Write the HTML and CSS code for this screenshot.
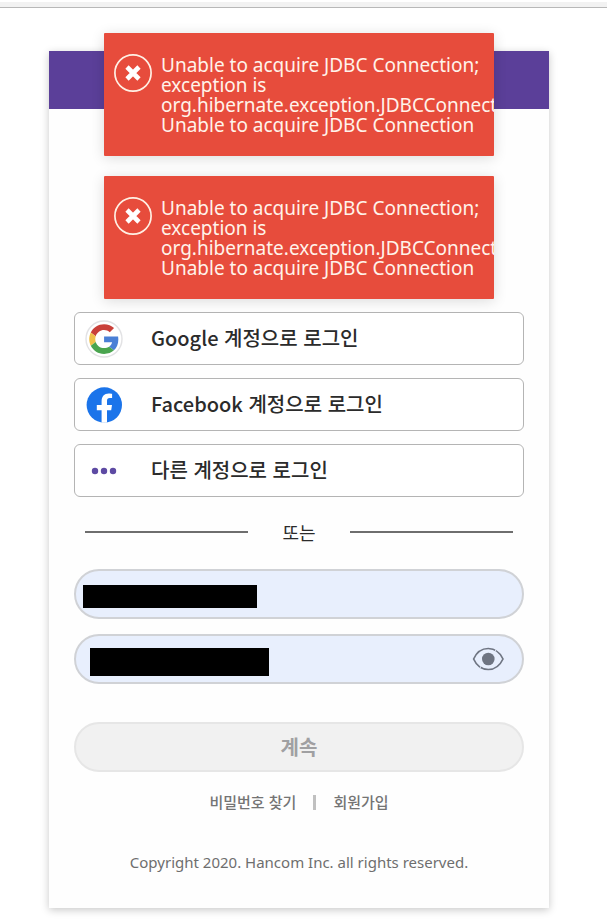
FILE: index.html
```html
<!DOCTYPE html>
<html lang="ko">
<head>
<meta charset="utf-8">
<title>로그인</title>
<link rel="stylesheet" href="styles.css">
</head>
<body>
<div class="topbar"></div>
<main class="page">
  <div class="card">
    <header class="card-header"></header>
    <div class="card-body">
      <div class="providers">
        <button type="button" class="provider">
          <svg class="provider-icon" viewBox="0 0 38 38" aria-hidden="true">
            <circle cx="19" cy="19" r="18" fill="#fff" stroke="#e2e2e4" stroke-width="1.4"/>
            <g transform="translate(4.2 4.2) scale(.62)">
              <path fill="#c9403a" d="M24 9.5c3.54 0 6.71 1.22 9.21 3.6l6.85-6.85C35.9 2.38 30.47 0 24 0 14.62 0 6.51 5.38 2.56 13.22l7.98 6.19C12.43 13.72 17.74 9.5 24 9.5z"/>
              <path fill="#4a7fd6" d="M46.98 24.55c0-1.57-.15-3.09-.38-4.55H24v9.02h12.94c-.58 2.96-2.26 5.48-4.78 7.18l7.73 6c4.51-4.18 7.09-10.36 7.09-17.65z"/>
              <path fill="#efc04a" d="M10.53 28.59c-.48-1.45-.76-2.99-.76-4.59s.27-3.14.76-4.59l-7.98-6.19C.92 16.46 0 20.12 0 24c0 3.88.92 7.54 2.56 10.78l7.97-6.19z"/>
              <path fill="#4aa54f" d="M24 48c6.48 0 11.93-2.13 15.89-5.81l-7.73-6c-2.15 1.45-4.92 2.3-8.16 2.3-6.26 0-11.57-4.22-13.47-9.91l-7.98 6.19C6.51 42.62 14.62 48 24 48z"/>
            </g>
          </svg>
          <span>Google 계정으로 로그인</span>
        </button>
        <button type="button" class="provider">
          <svg class="provider-icon" viewBox="0 0 38 38" aria-hidden="true">
            <circle cx="19.3" cy="19" r="17.7" fill="#1b74ea"/>
            <path fill="#fff" d="M16.6 36.5V24.2h-4.800v-5.200h4.800v-3.800c0-5 2.600-7.800 7.200-7.800 1.700 0 3.300.3 3.300.3v4.300h-2.300c-2.100 0-2.800 1.200-2.800 2.700v4.300h5l-.8 5.200h-4.200v12.300a18 18 0 0 1-5.400 0z"/>
          </svg>
          <span>Facebook 계정으로 로그인</span>
        </button>
        <button type="button" class="provider">
          <svg class="provider-icon" viewBox="0 0 38 38" aria-hidden="true" fill="#5d4aa3">
            <circle cx="10" cy="19" r="3.2"/><circle cx="19" cy="19" r="3.2"/><circle cx="28" cy="19" r="3.2"/>
          </svg>
          <span>다른 계정으로 로그인</span>
        </button>
      </div>

      <div class="divider"><span>또는</span></div>

      <form class="login">
        <div class="field">
          <input type="text" aria-label="아이디">
          <span class="mask mask-id"></span>
        </div>
        <div class="field">
          <input type="password" aria-label="비밀번호">
          <span class="mask mask-password"></span>
          <button type="button" class="reveal" aria-label="비밀번호 표시">
            <svg viewBox="0 0 32 24" aria-hidden="true">
              <path d="M1.600 12C4.500 5.500 9.500 1.500 16.300 1.500S28 5.500 31 12C28 18.500 23 22.500 16.300 22.500S4.500 18.500 1.600 12z" fill="none" stroke="#6f7582" stroke-width="1.700"/>
              <path d="M8.800 19.300l-1.200 2.600M24.300 2l-1 2.400" stroke="#e8effd" stroke-width="1"/>
              <circle cx="16.300" cy="12" r="6.300" fill="#6f7582"/>
            </svg>
          </button>
        </div>
        <button type="submit" class="submit" disabled>계속</button>
      </form>

      <nav class="links">
        <a href="#">비밀번호 찾기</a>
        <span class="bar"></span>
        <a href="#">회원가입</a>
      </nav>
      <footer class="copyright">Copyright 2020. Hancom Inc. all rights reserved.</footer>
    </div>

    <div class="toasts">
      <div class="toast" role="alert">
        <svg class="toast-icon" viewBox="0 0 38 38" aria-hidden="true">
          <circle cx="19" cy="19" r="18.100" fill="none" stroke="#fff0e4" stroke-width="1.700"/>
          <path d="M13 13L25 25M25 13L13 25" stroke="#fff" stroke-width="4.600"/>
        </svg>
        <p>Unable to acquire JDBC Connection; exception is org.hibernate.exception.JDBCConnectionException: Unable to acquire JDBC Connection</p>
      </div>
      <div class="toast" role="alert">
        <svg class="toast-icon" viewBox="0 0 38 38" aria-hidden="true">
          <circle cx="19" cy="19" r="18.100" fill="none" stroke="#fff0e4" stroke-width="1.700"/>
          <path d="M13 13L25 25M25 13L13 25" stroke="#fff" stroke-width="4.600"/>
        </svg>
        <p>Unable to acquire JDBC Connection; exception is org.hibernate.exception.JDBCConnectionException: Unable to acquire JDBC Connection</p>
      </div>
    </div>
  </div>
</main>
</body>
</html>
```
FILE: styles.css
```css
* {
  box-sizing: border-box;
}

body {
  margin: 0;
  background: #fff;
  color: #2b2b2b;
  font-family: "Noto Sans CJK KR", "Noto Sans", sans-serif;
}

button,
input {
  font: inherit;
  color: inherit;
}

.topbar {
  height: 8px;
  border-top: 2px solid #fff;
  border-bottom: 1px solid #b8b8b8;
  background: #f2f2f2;
}

.page {
  padding: 43px 58px 15px 49px;
}

.card {
  position: relative;
  max-width: 500px;
  margin: 0 auto;
  background: #fefefe;
  box-shadow: 0 2px 8px rgba(0, 0, 0, 0.22);
}

.card-header {
  height: 58px;
  background: #5b3f99;
}

.card-body {
  padding: 203px 25px 36px;
}

.providers {
  display: grid;
  gap: 13px;
}

.provider {
  display: flex;
  align-items: center;
  gap: 28px;
  height: 53px;
  padding: 0 10px;
  border: 1px solid #b4b4b4;
  border-radius: 6px;
  background: #fff;
  font-size: 20px;
  font-weight: 500;
  line-height: 28px;
}

.provider span {
  padding-bottom: 2px;
}

.provider-icon {
  width: 38px;
  height: 38px;
}

.divider {
  display: flex;
  align-items: center;
  gap: 34px;
  height: 70px;
  margin: 0 11px 2px;
  font-size: 18px;
}

.divider::before,
.divider::after {
  content: "";
  flex: 1;
  height: 2px;
  background: #6e6e6e;
}

.login {
  display: grid;
  gap: 15px;
}

.field {
  position: relative;
  height: 50px;
}

.field input {
  width: 100%;
  height: 100%;
  padding: 0 60px 0 20px;
  border: 2px solid #d0d2d6;
  border-radius: 25px;
  background: #e8effd;
}

.mask {
  position: absolute;
  background: #000;
}

.mask-id {
  top: 16px;
  left: 9px;
  width: 174px;
  height: 23px;
}

.mask-password {
  top: 14px;
  left: 16px;
  width: 179px;
  height: 28px;
}

.reveal {
  position: absolute;
  top: 13px;
  right: 20px;
  width: 32px;
  height: 24px;
  padding: 0;
  border: 0;
  background: none;
}

.reveal svg {
  display: block;
}

.submit {
  height: 50px;
  margin-top: 23px;
  padding: 0 0 2px;
  border: 2px solid #e6e6e6;
  border-radius: 25px;
  background: #f1f1f1;
  color: #a0a0a2;
  font-size: 20px;
  font-weight: 700;
}

.links {
  display: flex;
  justify-content: center;
  align-items: center;
  gap: 17px;
  margin-top: 20px;
  font-size: 15px;
  font-weight: 500;
  line-height: 20px;
}

.links a {
  color: #747474;
  text-decoration: none;
}

.bar {
  width: 3px;
  height: 15px;
  background: #c0c0c0;
}

.copyright {
  margin-top: 40px;
  color: #6e6e6e;
  font-family: "Noto Sans", sans-serif;
  font-size: 15px;
  line-height: 20px;
  text-align: center;
}

.toasts {
  position: absolute;
  top: -18px;
  left: 55px;
  right: 55px;
  display: grid;
  gap: 20px;
}

.toast {
  display: flex;
  align-items: flex-start;
  gap: 9px;
  padding: 21px 0 21px 10px;
  overflow: hidden;
  border-radius: 1px;
  background: #e74c3c;
  box-shadow: 0 2px 14px rgba(0, 0, 0, 0.14);
  color: #fff3ea;
  font-family: "Noto Sans", sans-serif;
  font-size: 19px;
  line-height: 20px;
}

.toast-icon {
  flex: none;
  width: 38px;
  height: 38px;
}

.toast p {
  flex: 1;
  min-width: 0;
  margin: 1px 0 0;
}
```
